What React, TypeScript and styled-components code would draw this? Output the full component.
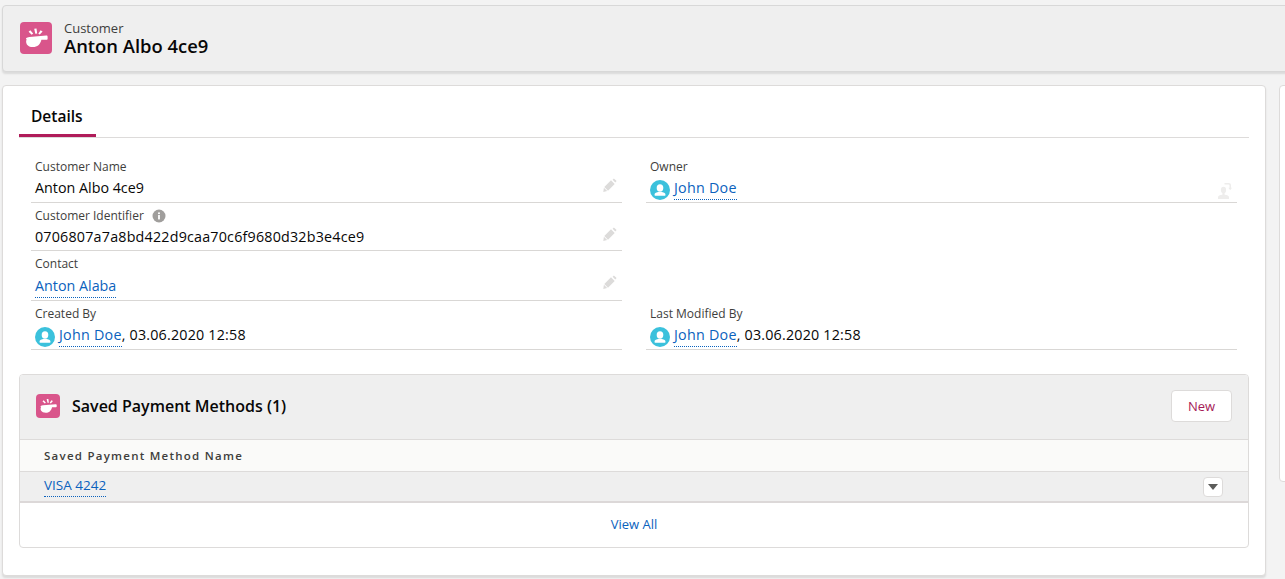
import React from "react";
import styled, { createGlobalStyle } from "styled-components";

const GlobalStyle = createGlobalStyle`
  html, body {
    margin: 0;
    height: 100%;
    overflow: hidden;
    background: #f3f3f3;
    font-family: "Open Sans", "Noto Sans", sans-serif;
    color: #16191f;
  }
`;

const Page = styled.div`
  width: 1300px;
  height: 579px;
  padding: 5px 0 0 2px;
  box-sizing: border-box;
  background: #f3f3f3;
`;

const Highlights = styled.header`
  display: flex;
  align-items: center;
  gap: 12px;
  height: 67px;
  padding: 0 17px 2px;
  box-sizing: border-box;
  background: #efefef;
  border: 1px solid #d8d8d8;
  border-radius: 4px;
  box-shadow: 0 2px 2px rgba(0, 0, 0, 0.1);
`;

const IconTile = styled.span<{ $size: number }>`
  display: flex;
  align-items: center;
  justify-content: center;
  flex: none;
  width: ${(p) => p.$size}px;
  height: ${(p) => p.$size}px;
  border-radius: 4px;
  background: #d9558b;
`;

const TitleBlock = styled.div`
  display: flex;
  flex-direction: column;
`;

const Eyebrow = styled.span`
  font-size: 13px;
  line-height: 16px;
  color: #3e3e3c;
`;

const Title = styled.h1`
  margin: 0;
  font-size: 18.4px;
  line-height: 20px;
  font-weight: 600;
  color: #080707;
`;

const Columns = styled.div`
  display: grid;
  grid-template-columns: 1264px 1fr;
  gap: 13px;
  align-items: start;
  margin-top: 13px;
`;

const Card = styled.section`
  height: 491px;
  padding: 0 16px;
  box-sizing: border-box;
  background: #fff;
  border: 1px solid #dddbda;
  border-radius: 4px;
  box-shadow: 0 2px 2px rgba(0, 0, 0, 0.1);
`;

const SideCard = styled.aside`
  height: 395px;
  background: #fff;
  border: 1px solid #dddbda;
  border-radius: 4px;
`;

const Tabs = styled.div`
  display: flex;
  height: 51px;
  border-bottom: 1px solid #dddbda;
`;

const Tab = styled.div`
  display: flex;
  align-items: center;
  padding: 11px 12px 0;
  height: 100%;
  box-sizing: border-box;
  width: 77px;
  font-size: 15.5px;
  font-weight: 600;
  color: #080707;
  border-bottom: 3px solid #b01c5a;
  margin-bottom: -1px;
`;

const FieldGrid = styled.div`
  display: grid;
  grid-template-columns: 591px 591px;
  grid-template-rows: 49px 48px 50px 49px;
  column-gap: 24px;
  margin: 16px 0 0 12px;
`;

const Field = styled.div<{ $blank?: boolean }>`
  position: relative;
  padding: 5px 4px 0;
  box-sizing: border-box;
  border-bottom: ${(p) => (p.$blank ? "0" : "1px solid #d9d7d5")};
`;

const Label = styled.div`
  display: flex;
  align-items: center;
  gap: 8px;
  font-size: 12px;
  line-height: 16px;
  color: #3e3e3c;
`;

const Value = styled.div<{ $shift?: number }>`
  display: flex;
  align-items: flex-start;
  gap: 4px;
  margin-top: ${(p) => 2 + (p.$shift ?? 0)}px;
  font-size: 14.3px;
  line-height: 22px;
  color: #080707;
`;

const RecordLink = styled.a`
  display: inline-block;
  height: 22px;
  color: #0b62bd;
  text-decoration: none;
  border-bottom: 1px dotted #0b62bd;
`;

const PersonLink = styled(RecordLink)`
  letter-spacing: 0.25px;
`;

const RowLink = styled(RecordLink)`
  margin-bottom: 2px;
`;

const AvatarSlot = styled.span`
  display: flex;
  margin-top: 3px;
`;

const Numeric = styled.span`
  letter-spacing: 0.2px;
`;

const Stamp = styled(Numeric)`
  margin-left: -4px;
`;

const EditSlot = styled.span<{ $top: number }>`
  position: absolute;
  right: 5px;
  top: ${(p) => p.$top}px;
  display: flex;
`;

const Related = styled.section`
  margin-top: 24px;
  height: 172px;
  background: #fff;
  border: 1px solid #dddbda;
  border-radius: 4px;
  overflow: hidden;
`;

const RelatedHeader = styled.div`
  display: flex;
  align-items: center;
  gap: 12px;
  height: 65px;
  padding: 0 16px 3px;
  box-sizing: border-box;
  background: #efefef;
  border-bottom: 1px solid #dddbda;
`;

const RelatedTitle = styled.h2`
  flex: 1;
  margin: 0;
  font-size: 16px;
  font-weight: 600;
  color: #080707;
`;

const NewButton = styled.button`
  width: 61px;
  height: 32px;
  padding: 0;
  background: #fff;
  border: 1px solid #dddbda;
  border-radius: 4px;
  color: #a61a57;
  font: inherit;
  font-size: 13px;
`;

const TableHead = styled.div`
  display: flex;
  align-items: center;
  height: 32px;
  padding: 0 24px;
  box-sizing: border-box;
  background: #fafaf9;
  border-bottom: 1px solid #dddbda;
  font-size: 11.5px;
  font-weight: 600;
  letter-spacing: 1.25px;
  color: #3e3e3c;
`;

const TableRow = styled.div`
  display: flex;
  align-items: center;
  justify-content: space-between;
  height: 31px;
  padding: 0 25px 0 24px;
  box-sizing: border-box;
  background: #efefef;
  border-bottom: 2px solid #dcd8d8;
  font-size: 13.5px;
  line-height: 22px;
`;

const MenuButton = styled.button`
  display: flex;
  align-items: center;
  justify-content: center;
  width: 20px;
  height: 20px;
  padding: 0;
  background: #fff;
  border: 1px solid #dddbda;
  border-radius: 4px;
`;

const Caret = styled.span`
  width: 0;
  height: 0;
  border-left: 5px solid transparent;
  border-right: 5px solid transparent;
  border-top: 6px solid #5c5c5a;
`;

const RelatedFooter = styled.div`
  display: flex;
  align-items: center;
  justify-content: center;
  height: 41px;
  font-size: 13px;
`;

const FooterLink = styled.a`
  color: #0b62bd;
  text-decoration: none;
`;

const Whistle = ({ size }: { size: number }) => (
  <svg width={size} height={size} viewBox="0 0 32 32" fill="#fff">
    <path d="M6.2 16.2c.7-.8 1.8-1.2 3.2-1.3l16.8-1.3c.9-.1 1.4.3 1.4 1.2v2c0 .6-.4 1-1 1h-5.2c-.8 2.9-1.6 4.2-3 5.4-1.5 1.2-3.2 1.8-5.4 1.8-2.9 0-5-.9-6.1-2.6-1-1.7-1-3.8-.2-4.9-.7-.4-.9-.8-.5-1.5z" />
    <path d="M14.2 6.8l2.3-.3.7 5-1.9.2zM20.6 8.2l2 1.2-2.8 3.2-1.5-.9zM8.6 9.8l1.7-1.5 2.9 3.2-1.5 1.3z" />
  </svg>
);

const Pencil = () => (
  <svg width="14" height="14" viewBox="0 0 14 14" fill="#dcdbda">
    <path d="M10.9.4l2.7 2.7-1.3 1.3-2.7-2.7zM8 2.3l3.7 3.7-6.7 6.7-3.7-3.7zM.9 9.8l3.3 3.3-3.9.9z" />
  </svg>
);

const OwnerSwap = () => (
  <svg width="14" height="18" viewBox="0 0 14 18" fill="#eeedec">
    <ellipse cx="5.5" cy="8" rx="2.6" ry="3.2" />
    <path d="M4.4 10.5h2.2v2.2c2.6.4 4.4 1 4.4 2.4V17H0v-1.9c0-1.4 1.8-2 4.4-2.4z" />
    <path d="M6.5 1h4.2c1.4 0 2.3.9 2.3 2.3v2.5h1L12.2 8.2 10.4 5.8h1.1V3.4c0-.6-.3-.9-.9-.9H6.5z" />
  </svg>
);

const InfoDot = () => (
  <svg width="14" height="14" viewBox="0 0 14 14">
    <circle cx="7" cy="7" r="6.5" fill="#a09e9c" />
    <rect x="6.1" y="6" width="1.8" height="4.4" rx=".3" fill="#fff" />
    <circle cx="7" cy="4.2" r="1.05" fill="#fff" />
  </svg>
);

const Avatar = () => (
  <AvatarSlot>
    <svg width="20" height="20" viewBox="0 0 20 20">
      <circle cx="10" cy="10" r="10" fill="#3bc1dc" />
      <ellipse cx="10" cy="8" rx="3.3" ry="3.7" fill="#fff" />
      <path d="M4.5 15c0-1.6 1.1-2.3 3.6-2.9h3.8c2.5.6 3.6 1.3 3.6 2.9 0 .4-.3.7-.7.7H5.2c-.4 0-.7-.3-.7-.7z" fill="#fff" />
    </svg>
  </AvatarSlot>
);

const Person = () => (
  <>
    <Avatar />
    <PersonLink href="#">John Doe</PersonLink>
  </>
);

const PersonStamp = () => (
  <Value>
    <Person />
    <Stamp>, 03.06.2020 12:58</Stamp>
  </Value>
);

export default function App() {
  return (
    <>
      <GlobalStyle />
      <Page>
        <Highlights>
          <IconTile $size={32}>
            <Whistle size={32} />
          </IconTile>
          <TitleBlock>
            <Eyebrow>Customer</Eyebrow>
            <Title>Anton Albo 4ce9</Title>
          </TitleBlock>
        </Highlights>
        <Columns>
          <Card>
            <Tabs>
              <Tab>Details</Tab>
            </Tabs>
            <FieldGrid>
              <Field>
                <Label>Customer Name</Label>
                <Value>Anton Albo 4ce9</Value>
                <EditSlot $top={24}>
                  <Pencil />
                </EditSlot>
              </Field>
              <Field>
                <Label>Owner</Label>
                <Value>
                  <Person />
                </Value>
                <EditSlot $top={28}>
                  <OwnerSwap />
                </EditSlot>
              </Field>
              <Field>
                <Label>
                  Customer Identifier <InfoDot />
                </Label>
                <Value>
                  <Numeric>0706807a7a8bd422d9caa70c6f9680d32b3e4ce9</Numeric>
                </Value>
                <EditSlot $top={24}>
                  <Pencil />
                </EditSlot>
              </Field>
              <Field $blank />
              <Field>
                <Label>Contact</Label>
                <Value $shift={1}>
                  <RecordLink href="#">Anton Alaba</RecordLink>
                </Value>
                <EditSlot $top={24}>
                  <Pencil />
                </EditSlot>
              </Field>
              <Field $blank />
              <Field>
                <Label>Created By</Label>
                <PersonStamp />
              </Field>
              <Field>
                <Label>Last Modified By</Label>
                <PersonStamp />
              </Field>
            </FieldGrid>
            <Related>
              <RelatedHeader>
                <IconTile $size={24}>
                  <Whistle size={24} />
                </IconTile>
                <RelatedTitle>Saved Payment Methods (1)</RelatedTitle>
                <NewButton>New</NewButton>
              </RelatedHeader>
              <TableHead>Saved Payment Method Name</TableHead>
              <TableRow>
                <RowLink href="#">VISA 4242</RowLink>
                <MenuButton>
                  <Caret />
                </MenuButton>
              </TableRow>
              <RelatedFooter>
                <FooterLink href="#">View All</FooterLink>
              </RelatedFooter>
            </Related>
          </Card>
          <SideCard />
        </Columns>
      </Page>
    </>
  );
}
